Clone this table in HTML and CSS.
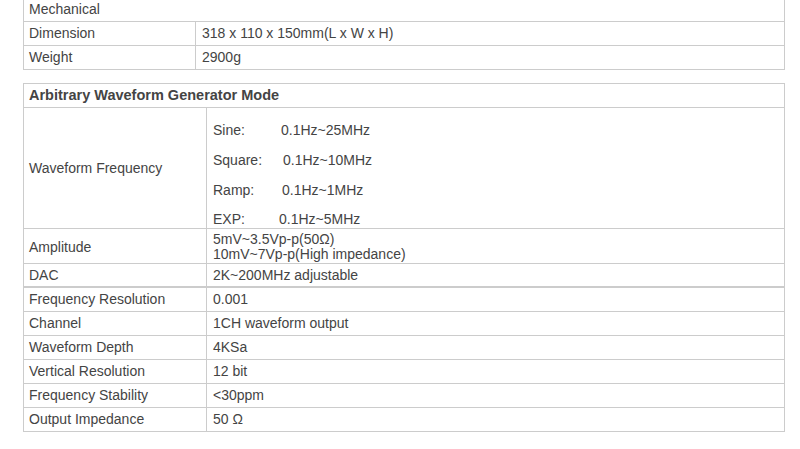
FILE: index.html
```html
<!DOCTYPE html>
<html>
<head>
<meta charset="utf-8">
<link rel="stylesheet" href="styles.css">
</head>
<body>
<div class="page">
  <table class="spec spec-mech">
    <colgroup><col class="c1"><col></colgroup>
    <tr class="caprow"><td colspan="2" class="cap">Mechanical</td></tr>
    <tr><td>Dimension</td><td>318 x 110 x 150mm(L x W x H)</td></tr>
    <tr><td>Weight</td><td>2900g</td></tr>
  </table>

  <table class="spec spec-awg">
    <colgroup><col class="c2"><col></colgroup>
    <tr><td colspan="2" class="head">Arbitrary Waveform Generator Mode</td></tr>
    <tr>
      <td>Waveform Frequency</td>
      <td class="freq">
        <div class="fl"><span class="lab l-sine">Sine:</span><span>0.1Hz~25MHz</span></div>
        <div class="fl"><span class="lab l-sq">Square:</span><span>0.1Hz~10MHz</span></div>
        <div class="fl"><span class="lab l-ramp">Ramp:</span><span>0.1Hz~1MHz</span></div>
        <div class="fl fl-last"><span class="lab l-exp">EXP:</span><span>0.1Hz~5MHz</span></div>
      </td>
    </tr>
    <tr class="amp"><td>Amplitude</td><td>5mV~3.5Vp-p(50Ω)<br>10mV~7Vp-p(High impedance)</td></tr>
    <tr class="dac"><td>DAC</td><td>2K~200MHz adjustable</td></tr>
    <tr><td>Frequency Resolution</td><td>0.001</td></tr>
    <tr><td>Channel</td><td>1CH waveform output</td></tr>
    <tr><td>Waveform Depth</td><td>4KSa</td></tr>
    <tr><td>Vertical Resolution</td><td>12 bit</td></tr>
    <tr><td>Frequency Stability</td><td>&lt;30ppm</td></tr>
    <tr><td>Output Impedance</td><td>50 Ω</td></tr>
  </table>
</div>
</body>
</html>
```

FILE: styles.css
```css
html, body {
  margin: 0;
  padding: 0;
  background: #fff;
}

.page {
  padding-left: 23px;
  width: 762px;
  font-family: "Liberation Sans", Arial, sans-serif;
  font-size: 14px;
  color: #444;
}

.spec {
  width: 762px;
  border-collapse: collapse;
  table-layout: fixed;
}

.c1 { width: 172px; }
.c2 { width: 183px; }

.spec td {
  border: 1px solid #ccc;
  padding: 3px 6px;
  line-height: 17px;
  vertical-align: middle;
  text-align: left;
}

.spec td:first-child {
  padding-left: 5px;
}

.spec-mech {
  margin-top: -3px;
}

.spec-mech tr.caprow td {
  padding: 3px 6px 3px 5px;
}

.spec-awg {
  margin-top: 13px;
}

.head {
  font-weight: bold;
  font-size: 14.5px;
}

.spec td.freq {
  padding: 0 6px;
}

.fl {
  display: flex;
  margin-top: 13px;
  line-height: 17px;
}

.fl:first-child {
  margin-top: 14px;
}

.fl-last {
  margin-top: 12px;
}

.lab {
  display: inline-block;
}

.l-sine { width: 68px; }
.l-sq { width: 70px; }
.l-ramp { width: 69px; }
.l-exp { width: 66px; }

.spec tr.amp td {
  line-height: 15px;
  padding: 3px 6px 1px;
}

.spec tr.amp td:first-child {
  padding-left: 5px;
}

.spec tr.dac td {
  padding: 3px 6px 2px;
  border-bottom: 2px solid #ccc;
}

.spec tr.dac td:first-child {
  padding-left: 5px;
}
```
